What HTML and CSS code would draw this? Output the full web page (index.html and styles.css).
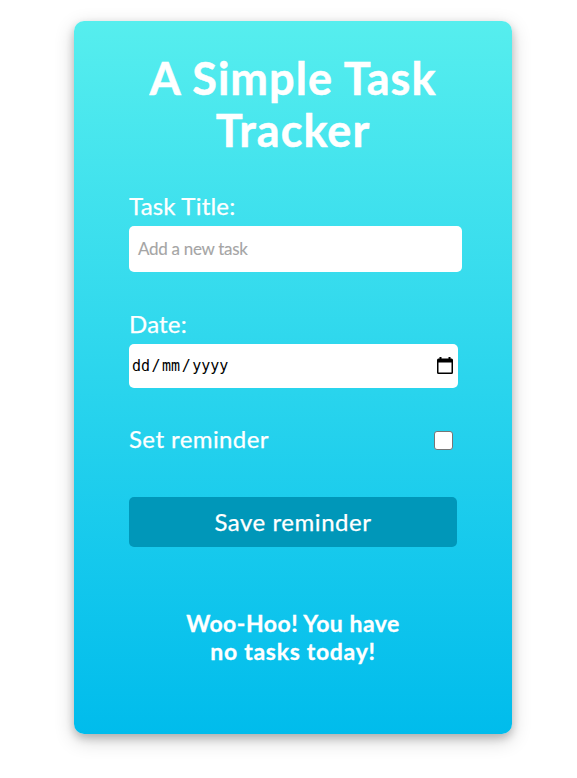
FILE: index.html
```html
<!DOCTYPE html>
<html lang="en">
<head>
<meta charset="utf-8">
<title>A Simple Task Tracker</title>
<link rel="stylesheet" href="styles.css">
</head>
<body>
<main class="card">
<h1 class="title">A Simple Task<br>Tracker</h1>
<form class="form">
<div class="label">Task Title:</div>
<div class="input task">Add a new task</div>
<div class="label label-date">Date:</div>
<div class="input date"><span>dd<span class="slash">/</span>mm<span class="slash">/</span>yyyy</span>
<svg class="calendar" viewBox="0 0 20 20"><path fill="#000" fill-rule="evenodd" d="M4.500 1h2v1.500h7V1h2v1.500H16.500Q18 2.500 18 4V16.500Q18 18 16.500 18H3.500Q2 18 2 16.500V4Q2 2.500 3.500 2.500h1ZM3.500 6.500V16.500H16.500V6.500Z"/></svg></div>
<div class="reminder"><span class="reminder-text">Set reminder</span><span class="checkbox"></span></div>
<button class="save" type="button">Save reminder</button>
</form>
<p class="empty"><span class="empty-first">Woo-Hoo! You have</span><br><span class="empty-second">no tasks today!</span></p>
</main>
</body>
</html>
```
FILE: styles.css
```css
* { box-sizing: border-box; }
html { background: #fff; }
body { min-height: 778px; margin: 0; padding: 21px 0 0 74px; background: #fff; font-family: Lato, sans-serif; color: #fff; }
.card { width: 438px; height: 713px; padding: 31px 55px 0; border-radius: 10px; background: linear-gradient(#56eeee, #00bcec); box-shadow: 0 4px 8px rgba(0,0,0,.2), 0 6px 20px rgba(0,0,0,.19); }
.title { margin: 0; text-align: center; font: 700 45px/52px Lato, sans-serif; letter-spacing: 1.05px; white-space: nowrap; -webkit-text-stroke: .5px #fff; }
.form { margin-top: 32px; }
.label { height: 38px; padding-top: 1px; font-size: 24px; line-height: 34px; letter-spacing: .2px; -webkit-text-stroke: .25px #fff; }
.label-date { margin-top: 34px; }
.input { display: flex; align-items: center; border-radius: 5px; background: #fff; }
.task { width: 333px; height: 46px; padding: 0 9px 2px; color: #a5a5a5; font-size: 17px; letter-spacing: -.3px; -webkit-text-stroke: .1px #a5a5a5; }
.date { width: 329px; height: 44px; color: #000; padding: 0 3px; justify-content: space-between; font: 15px "DejaVu Sans Mono", monospace; }
.slash { margin: 0 1.500px; }
.calendar { width: 20px; height: 20px; }
.reminder { display: flex; justify-content: space-between; align-items: center; width: 324px; margin-top: 35px; height: 34px; font-size: 24px; letter-spacing: .42px; -webkit-text-stroke: .25px #fff; }
.reminder-text { padding-bottom: 3px; }
.checkbox { width: 19px; height: 19px; border: 1px solid #767676; border-radius: 3px; background: #fff; }
.save { display: block; width: 328px; height: 50px; margin-top: 40px; padding: 0 0 2px; border: 0; border-radius: 5px; color: #fff; background: #0097b9; font: 24px Lato, sans-serif; letter-spacing: .55px; -webkit-text-stroke: .25px #fff; }
.empty { margin: 62px 0 0; text-align: center; font: 700 23px/28px Lato, sans-serif; letter-spacing: .5px; -webkit-text-stroke: .3px #fff; }
.empty-second { letter-spacing: .7px; }
```
